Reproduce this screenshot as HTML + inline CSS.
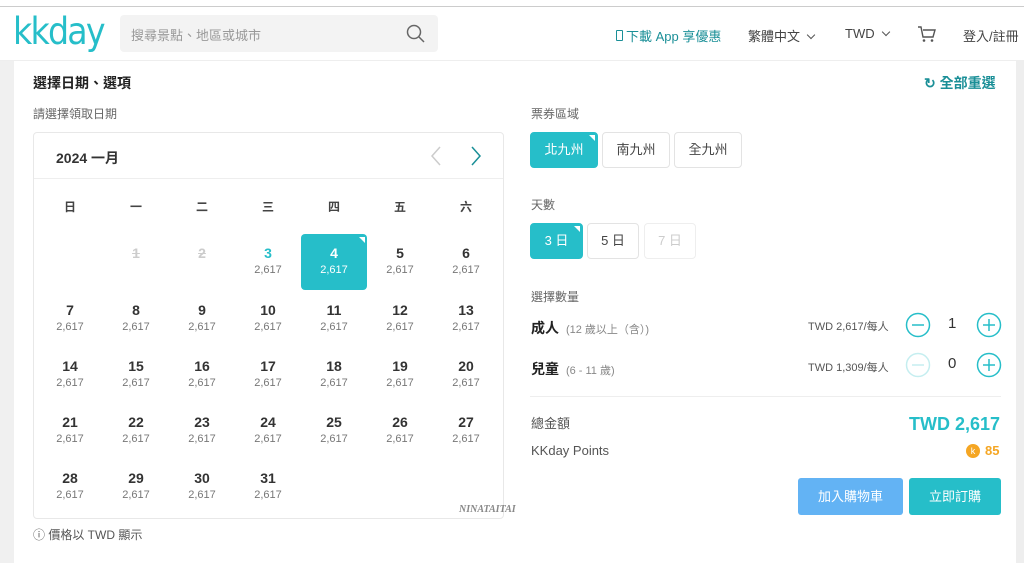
<!DOCTYPE html>
<html><head><meta charset="utf-8"><style>
*{margin:0;padding:0;box-sizing:border-box}
body{width:1024px;height:563px;overflow:hidden;background:#fff;font-family:"Liberation Sans","Noto Sans CJK TC",sans-serif;position:relative;color:#333}
.a{position:absolute}
.hdr{left:0;top:6px;width:1024px;height:55px;border-top:1px solid #ccc;border-bottom:1px solid #eee;background:#fff}
.search{left:120px;top:15px;width:318px;height:37px;background:#f3f3f3;border-radius:4px}
.nav{top:26px;font-size:13px;color:#444}
.cal{left:33px;top:132px;width:471px;height:387px;border:1px solid #e8e8e8;border-radius:4px}
.d{position:absolute;width:66px;text-align:center}
.d b{display:block;font-size:14px;font-weight:bold;color:#333;height:20px;line-height:20px}
.d i{display:block;font-style:normal;font-size:11px;color:#777;line-height:14px}
.btn{position:absolute;height:36px;border:1px solid #e3e3e3;border-radius:4px;font-size:13px;text-align:center;line-height:34px;color:#444;background:#fff}
.on{background:#26bec9;border-color:#26bec9;color:#fff}
.on::after{content:"";position:absolute;right:2px;top:2px;border-top:6px solid #fff;border-left:6px solid transparent}
.chev{display:inline-block;width:6px;height:6px;border-right:1.3px solid #555;border-bottom:1.3px solid #555;transform:rotate(45deg);margin-left:8px;position:relative;top:-3px}
</style></head><body>
<div class="a" style="left:0;top:60px;width:14px;height:503px;background:#f0f0f0"></div>
<div class="a" style="left:1016px;top:60px;width:8px;height:503px;background:#eee"></div>
<div class="a hdr"></div>
<div class="a" style="left:13px;top:12px;font-size:37px;font-family:'DejaVu Sans',sans-serif;color:#26bec9;letter-spacing:-2px;line-height:40px;transform:scaleX(.9);transform-origin:left">kkday</div>
<div class="a search"><span class="a" style="left:11px;top:10px;font-size:13px;color:#999">搜尋景點、地區或城市</span>
<svg class="a" style="left:286px;top:9px" width="20" height="20" viewBox="0 0 20 20"><circle cx="8" cy="8" r="6.5" fill="none" stroke="#666" stroke-width="1.5"/><path d="M13 13l5 5" stroke="#666" stroke-width="1.5"/></svg></div>
<div class="a nav" style="left:616px;color:#1a8f97"><span style="display:inline-block;width:7px;height:11px;border:1.5px solid #1a8f97;border-radius:1px;margin-right:3px"></span>下載 App 享優惠</div>
<div class="a nav" style="left:748px">繁體中文<span class="chev"></span></div>
<div class="a nav" style="left:845px">TWD<span class="chev"></span></div>
<svg class="a" style="left:917px;top:25px" width="20" height="18" viewBox="0 0 20 18"><path d="M1 2h3l2 10h10l2-7H6" fill="none" stroke="#555" stroke-width="1.4"/><circle cx="7" cy="15.5" r="1.3" fill="#555"/><circle cx="15" cy="15.5" r="1.3" fill="#555"/></svg>
<div class="a nav" style="left:963px">登入/註冊</div>

<div class="a" style="left:33px;top:73px;font-size:14px;font-weight:bold;color:#222">選擇日期、選項</div>
<div class="a" style="left:924px;top:73px;font-size:14px;font-weight:bold;color:#1a8f97">↻ 全部重選</div>
<div class="a" style="left:33px;top:105px;font-size:12px;color:#666">請選擇領取日期</div>

<div class="a cal">
<div class="a" style="left:22px;top:15px;font-size:14px;font-weight:bold;color:#333">2024 一月</div>
<svg class="a" style="left:396px;top:12px" width="12" height="22" viewBox="0 0 12 22"><path d="M10 2L2 11l8 9" fill="none" stroke="#ccc" stroke-width="1.5"/></svg>
<svg class="a" style="left:436px;top:12px" width="12" height="22" viewBox="0 0 12 22"><path d="M2 2l8 9-8 9" fill="none" stroke="#1a8f97" stroke-width="1.5"/></svg>
<div class="a" style="left:0;top:45px;width:469px;border-top:1px solid #eee"></div>
</div>
<div class="a" style="left:37px;top:198px;width:462px;font-size:12px;color:#444;font-weight:bold">
<span class="d" style="left:0">日</span><span class="d" style="left:66px">一</span><span class="d" style="left:132px">二</span><span class="d" style="left:198px">三</span><span class="d" style="left:264px">四</span><span class="d" style="left:330px">五</span><span class="d" style="left:396px">六</span></div>
<div class="a" style="left:301px;top:234px;width:66px;height:56px;background:#26bec9;border-radius:4px"></div>
<div class="a" style="left:359px;top:237px;border-top:6px solid #fff;border-left:6px solid transparent"></div>
<div class="a" style="left:37px;top:243px">
<div class="d" style="left:66px;top:0"><b style="color:#ccc;text-decoration:line-through">1</b></div>
<div class="d" style="left:132px;top:0"><b style="color:#ccc;text-decoration:line-through">2</b></div>
<div class="d" style="left:198px;top:0"><b style="color:#26bec9">3</b><i>2,617</i></div>
<div class="d" style="left:264px;top:0"><b style="color:#fff">4</b><i style="color:#fff">2,617</i></div>
<div class="d" style="left:330px;top:0"><b>5</b><i>2,617</i></div>
<div class="d" style="left:396px;top:0"><b>6</b><i>2,617</i></div>
<div class="d" style="left:0;top:57px"><b>7</b><i>2,617</i></div>
<div class="d" style="left:66px;top:57px"><b>8</b><i>2,617</i></div>
<div class="d" style="left:132px;top:57px"><b>9</b><i>2,617</i></div>
<div class="d" style="left:198px;top:57px"><b>10</b><i>2,617</i></div>
<div class="d" style="left:264px;top:57px"><b>11</b><i>2,617</i></div>
<div class="d" style="left:330px;top:57px"><b>12</b><i>2,617</i></div>
<div class="d" style="left:396px;top:57px"><b>13</b><i>2,617</i></div>
<div class="d" style="left:0;top:113px"><b>14</b><i>2,617</i></div>
<div class="d" style="left:66px;top:113px"><b>15</b><i>2,617</i></div>
<div class="d" style="left:132px;top:113px"><b>16</b><i>2,617</i></div>
<div class="d" style="left:198px;top:113px"><b>17</b><i>2,617</i></div>
<div class="d" style="left:264px;top:113px"><b>18</b><i>2,617</i></div>
<div class="d" style="left:330px;top:113px"><b>19</b><i>2,617</i></div>
<div class="d" style="left:396px;top:113px"><b>20</b><i>2,617</i></div>
<div class="d" style="left:0;top:169px"><b>21</b><i>2,617</i></div>
<div class="d" style="left:66px;top:169px"><b>22</b><i>2,617</i></div>
<div class="d" style="left:132px;top:169px"><b>23</b><i>2,617</i></div>
<div class="d" style="left:198px;top:169px"><b>24</b><i>2,617</i></div>
<div class="d" style="left:264px;top:169px"><b>25</b><i>2,617</i></div>
<div class="d" style="left:330px;top:169px"><b>26</b><i>2,617</i></div>
<div class="d" style="left:396px;top:169px"><b>27</b><i>2,617</i></div>
<div class="d" style="left:0;top:225px"><b>28</b><i>2,617</i></div>
<div class="d" style="left:66px;top:225px"><b>29</b><i>2,617</i></div>
<div class="d" style="left:132px;top:225px"><b>30</b><i>2,617</i></div>
<div class="d" style="left:198px;top:225px"><b>31</b><i>2,617</i></div>
</div>
<div class="a" style="left:459px;top:504px;font-family:'Liberation Serif',serif;font-style:italic;font-weight:bold;font-size:10px;color:#888">NINATAITAI</div>
<div class="a" style="left:33px;top:526px;font-size:12px;color:#555">ⓘ 價格以 TWD 顯示</div>

<div class="a" style="left:531px;top:105px;font-size:12px;color:#666">票券區域</div>
<div class="btn on" style="left:530px;top:132px;width:68px">北九州</div>
<div class="btn" style="left:602px;top:132px;width:68px">南九州</div>
<div class="btn" style="left:674px;top:132px;width:68px">全九州</div>
<div class="a" style="left:531px;top:196px;font-size:12px;color:#666">天數</div>
<div class="btn on" style="left:530px;top:223px;width:53px">3 日</div>
<div class="btn" style="left:587px;top:223px;width:52px">5 日</div>
<div class="btn" style="left:644px;top:223px;width:52px;color:#ccc;border-color:#eee">7 日</div>
<div class="a" style="left:531px;top:288px;font-size:12px;color:#666">選擇數量</div>
<div class="a" style="left:531px;top:318px;font-size:14px;font-weight:bold;color:#222">成人 <span style="font-size:11px;font-weight:normal;color:#888">&nbsp;(12 歲以上（含）)</span></div>
<div class="a" style="left:808px;top:318px;font-size:11px;color:#555">TWD 2,617/每人</div>
<svg class="a" style="left:905px;top:312px" width="26" height="26" viewBox="0 0 26 26"><circle cx="13" cy="13" r="11.5" fill="none" stroke="#26bec9" stroke-width="1.5"/><path d="M7 13h12" stroke="#26bec9" stroke-width="1.5"/></svg>
<div class="a" style="left:948px;top:315px;font-size:15px;color:#333">1</div>
<svg class="a" style="left:976px;top:312px" width="26" height="26" viewBox="0 0 26 26"><circle cx="13" cy="13" r="11.5" fill="none" stroke="#26bec9" stroke-width="1.5"/><path d="M7 13h12M13 7v12" stroke="#26bec9" stroke-width="1.5"/></svg>
<div class="a" style="left:531px;top:359px;font-size:14px;font-weight:bold;color:#222">兒童 <span style="font-size:11px;font-weight:normal;color:#888">&nbsp;(6 - 11 歲)</span></div>
<div class="a" style="left:808px;top:359px;font-size:11px;color:#555">TWD 1,309/每人</div>
<svg class="a" style="left:905px;top:352px" width="26" height="26" viewBox="0 0 26 26"><circle cx="13" cy="13" r="11.5" fill="none" stroke="#c5eef0" stroke-width="1.5"/><path d="M7 13h12" stroke="#c5eef0" stroke-width="1.5"/></svg>
<div class="a" style="left:948px;top:355px;font-size:15px;color:#333">0</div>
<svg class="a" style="left:976px;top:352px" width="26" height="26" viewBox="0 0 26 26"><circle cx="13" cy="13" r="11.5" fill="none" stroke="#26bec9" stroke-width="1.5"/><path d="M7 13h12M13 7v12" stroke="#26bec9" stroke-width="1.5"/></svg>
<div class="a" style="left:530px;top:396px;width:471px;border-top:1px solid #eee"></div>
<div class="a" style="left:531px;top:413px;font-size:13px;color:#555">總金額</div>
<div class="a" style="left:909px;top:414px;font-size:18px;font-weight:bold;color:#26bec9">TWD 2,617</div>
<div class="a" style="left:531px;top:443px;font-size:13px;color:#555">KKday Points</div>
<div class="a" style="left:966px;top:444px;width:14px;height:14px;border-radius:50%;background:#f5a623;color:#fff;font-size:9px;text-align:center;line-height:14px">k</div>
<div class="a" style="left:985px;top:443px;font-size:13px;font-weight:bold;color:#f5a623">85</div>
<div class="a" style="left:798px;top:478px;width:105px;height:37px;background:#63b3f4;border-radius:3px;color:#fff;font-size:13px;text-align:center;line-height:37px">加入購物車</div>
<div class="a" style="left:909px;top:478px;width:92px;height:37px;background:#26bec9;border-radius:3px;color:#fff;font-size:13px;text-align:center;line-height:37px">立即訂購</div>
</body></html>
